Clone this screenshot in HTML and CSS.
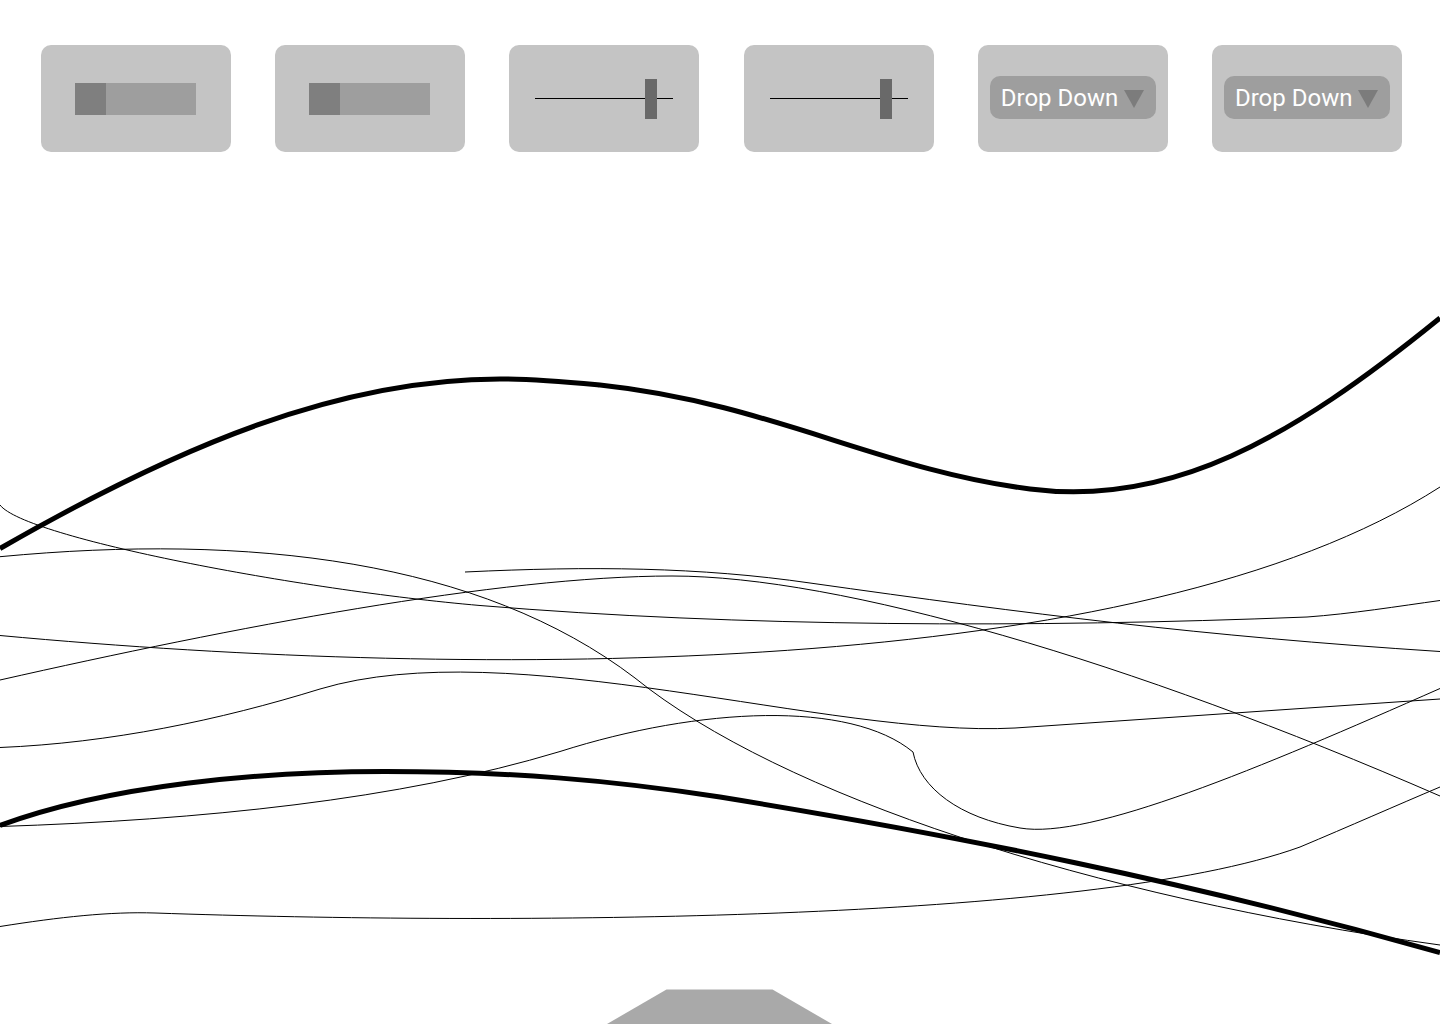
FILE: index.html
```html
<!DOCTYPE html>
<html lang="en">
<head>
  <meta charset="utf-8">
  <meta name="viewport" content="width=device-width, initial-scale=1">
  <title>Wave controls</title>
  <link rel="stylesheet" href="styles.css">
</head>
<body>
  <header class="controls">
    <div class="card card-toggle">
      <input class="toggle" type="checkbox" aria-label="Toggle 1">
    </div>
    <div class="card card-toggle">
      <input class="toggle" type="checkbox" aria-label="Toggle 2">
    </div>
    <div class="card card-slider">
      <input class="slider" type="range" min="0" max="126" value="110" aria-label="Slider 1">
    </div>
    <div class="card card-slider">
      <input class="slider" type="range" min="0" max="126" value="110" aria-label="Slider 2">
    </div>
    <div class="card card-dropdown">
      <div class="dropdown">
        <select class="dropdown-select" aria-label="Drop down 1">
          <option>Drop Down</option>
        </select>
        <svg class="dropdown-arrow" viewBox="0 0 20 18" aria-hidden="true"><path d="M0 0H20L10 18Z"/></svg>
      </div>
    </div>
    <div class="card card-dropdown">
      <div class="dropdown">
        <select class="dropdown-select" aria-label="Drop down 2">
          <option>Drop Down</option>
        </select>
        <svg class="dropdown-arrow" viewBox="0 0 20 18" aria-hidden="true"><path d="M0 0H20L10 18Z"/></svg>
      </div>
    </div>
  </header>

  <main class="stage">
    <svg class="waves" viewBox="0 152 1440 837" aria-hidden="true">
      <g class="wave-thin">
        <path d="M0 505C25 538 300 590 480 605.5C740 627 1030 628 1307 617C1350 614 1400 606 1440 600.5"/>
        <path d="M0 556.7C250 533 480 560 635 678C780 795 1090 897 1440 945"/>
        <path d="M0 635.5C480 680 1140 680 1440 487"/>
        <path d="M0 680C230 628 500 576 672 576C840 576 1130 661 1440 796"/>
        <path d="M465 572C590 566 700 567 810 583C1030 614 1200 636 1440 651.5"/>
        <path d="M0 747.5C110 743 220 720 320 689C510 632 830 738 1015 728L1440 699"/>
        <path d="M0 826.5C200 820 400 800 560 751.5C700 707 850 700 913 752C920 788 960 818 1020 828C1090 840 1260 768 1440 688.5"/>
        <path d="M0 926.5C60 917 110 911.5 155 913C500 925 1090 923 1300 847C1350 826 1395 806 1440 787"/>
      </g>
      <g class="wave-thick">
        <path d="M0 548.5C180 445 340 379 500 379C535 379 567 382 600 385C770 403 880 470 1030 489C1170 507 1290 440 1440 318"/>
        <path d="M0 825.5C110 785 260 771.5 385 771.5C510 771.5 610 780 720 797C960 836 1190 882 1440 952.5"/>
      </g>
    </svg>
  </main>

  <footer class="drawer">
    <button class="drawer-handle" type="button" aria-label="Open drawer">
      <svg class="drawer-shape" viewBox="0 0 226 35" aria-hidden="true"><path d="M0 35L59.5 0.5H165.500L225 35Z"/></svg>
    </button>
  </footer>
</body>
</html>
```

FILE: styles.css
```css
* {
  box-sizing: border-box;
}

body {
  margin: 0;
  min-height: 100vh;
  display: flex;
  flex-direction: column;
  background: #fff;
  font-family: Roboto, sans-serif;
}

.controls {
  display: flex;
  justify-content: space-between;
  padding: 45px 38px 0 41px;
}

.card {
  flex: 0 1 190px;
  height: 107px;
  border-radius: 10px;
  background: #c4c4c4;
}

.card-toggle {
  padding: 38px 35px 37px 34px;
}

.card-slider {
  padding: 34px 26px 33px;
}

.card-dropdown {
  padding: 31px 12px 33px;
}

/* Toggle */
.toggle {
  appearance: none;
  display: block;
  width: 100%;
  height: 32px;
  margin: 0;
  background: #9e9e9e;
}

.toggle::before {
  content: "";
  display: block;
  width: 31px;
  height: 32px;
  background: #7f7f7f;
}

.toggle:checked::before {
  margin-left: auto;
}

/* Slider */
.slider {
  appearance: none;
  display: block;
  width: 100%;
  height: 40px;
  margin: 0;
  background: linear-gradient(#000, #000) 0 19px / 100% 1px no-repeat;
}

.slider::-webkit-slider-thumb {
  appearance: none;
  width: 12px;
  height: 40px;
  background: #696969;
}

.slider::-moz-range-thumb {
  width: 12px;
  height: 40px;
  border: 0;
  border-radius: 0;
  background: #696969;
}

/* Drop-down */
.dropdown {
  display: grid;
  align-items: center;
}

.dropdown-select {
  grid-area: 1 / 1;
  appearance: none;
  width: 100%;
  height: 43px;
  padding: 0 0 0 11px;
  border: 0;
  border-radius: 10px;
  background: #9e9e9e;
  color: #fff;
  font: 24px/28px Roboto, sans-serif;
}

.dropdown-arrow {
  grid-area: 1 / 1;
  justify-self: end;
  width: 20px;
  height: 18px;
  margin: 3px 12px 0 0;
  fill: #7c7c7c;
  pointer-events: none;
}

/* Waves */
.waves {
  display: block;
  width: 100%;
  fill: none;
  stroke: #000;
}

.wave-thin {
  stroke-width: 1;
}

.wave-thick {
  stroke-width: 5;
}

/* Drawer handle */
.drawer {
  display: flex;
  justify-content: center;
  margin-top: auto;
}

.drawer-handle {
  padding: 0;
  border: 0;
  background: none;
}

.drawer-shape {
  display: block;
  width: 226px;
  height: 35px;
  fill: #a9a9a9;
}
```
